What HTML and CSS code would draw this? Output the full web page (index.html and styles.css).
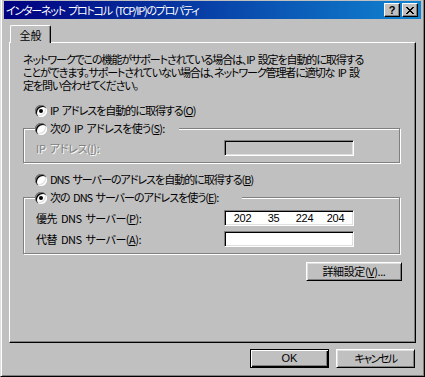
FILE: index.html
```html
<!doctype html>
<html>
<head>
	<meta charset='utf-8'>
	<title>インターネット プロトコル (TCP/IP)のプロパティ</title>
	<link rel="stylesheet" href="styles.css">
</head>
<body>

	<div class='window'>
		<div class='titlebar'>
			<span class='title'>インターネット プロトコル (TCP/IP)のプロパティ</span>
			<div class='caption-buttons'>
				<span class='cap-btn help'>?</span>
				<span class='cap-btn close'>
					<svg width='8' height='7' viewBox='0 0 8 7'>
						<path d='M0 0h2v1h1v1h2v-1h1v-1h2v1h-1v1h-1v1h-1v1h1v1h1v1h1v1h-2v-1h-1v-1h-2v1h-1v1h-2v-1h1v-1h1v-1h1v-1h-1v-1h-1v-1h-1z' fill='#000'/>
					</svg>
				</span>
			</div>
		</div>

		<div class='client'>
			<div class='tabs'>
				<div class='tab active'>全般</div>
			</div>

			<div class='panel'>
				<p class='intro'>ネットワークでこの機能がサポートされている場合は、IP 設定を自動的に取得する<br>ことができます。サポートされていない場合は、ネットワーク管理者に適切な IP 設<br>定を問い合わせてください。</p>

				<div class='radio-row first'>
					<span class='radio checked'></span>
					<span class='radio-text'>IP アドレスを自動的に取得する(<u>O</u>)</span>
				</div>

				<fieldset class='group group-ip'>
					<legend class='radio-row'>
						<span class='radio'></span>
						<span class='radio-text short'>次の IP アドレスを使う(<u>S</u>):</span>
					</legend>
					<div class='field-row'>
						<span class='label disabled'>IP アドレス(<u>I</u>):</span>
						<span class='ip-box disabled'></span>
					</div>
				</fieldset>

				<div class='radio-row dns-auto'>
					<span class='radio'></span>
					<span class='radio-text'>DNS サーバーのアドレスを自動的に取得する(<u>B</u>)</span>
				</div>

				<fieldset class='group group-dns'>
					<legend class='radio-row'>
						<span class='radio checked'></span>
						<span class='radio-text'>次の DNS サーバーのアドレスを使う(<u>E</u>):</span>
					</legend>
					<div class='field-row'>
						<span class='label'>優先 DNS サーバー(<u>P</u>):</span>
						<span class='ip-box'>
							<span class='octet'>202</span>
							<span class='octet'>35</span>
							<span class='octet'>224</span>
							<span class='octet'>204</span>
						</span>
					</div>
					<div class='field-row'>
						<span class='label'>代替 DNS サーバー(<u>A</u>):</span>
						<span class='ip-box'></span>
					</div>
				</fieldset>

				<div class='advanced-row'>
					<span class='button advanced'>詳細設定(<u>V</u>)...</span>
				</div>
			</div>

			<div class='actions'>
				<span class='button default'>OK</span>
				<span class='button cancel'>キャンセル</span>
			</div>
		</div>
	</div>

</body>
</html>
```

FILE: styles.css
```css
* {
	box-sizing: border-box;
}

body {
	margin: 0;
	background: #c0c0c0;
	color: #000;
	font-family: "Noto Sans CJK JP", "Noto Sans", sans-serif;
	font-size: 11px;
	line-height: 13px;
	font-feature-settings: "palt";
	word-spacing: 2px;
}

u {
	text-decoration: underline;
	text-underline-offset: 1px;
}

/* The window frame */
.window {
	width: 425px;
	height: 377px;
	display: flex;
	flex-direction: column;
	background: #c0c0c0;
	border: 1px solid;
	border-color: #dfdfdf #000 #000 #dfdfdf;
	border-top: 0;
	box-shadow: inset 1px 0 #fff, inset -1px -1px #808080;
	padding: 1px 3px 3px 3px;
}

/* Title bar */
.titlebar {
	height: 18px;
	display: flex;
	align-items: center;
	justify-content: space-between;
	padding: 0 3px 0 2px;
	background: linear-gradient(to right, #000080, #1084d0);
	color: #fff;
}

.title {
	white-space: nowrap;
	letter-spacing: -1.25px;
}

.caption-buttons {
	display: flex;
	gap: 2px;
}

.cap-btn {
	width: 16px;
	height: 14px;
	display: flex;
	align-items: center;
	justify-content: center;
	background: #c0c0c0;
	color: #000;
	font-family: "Liberation Sans", sans-serif;
	font-weight: bold;
	font-size: 11px;
	border: 1px solid;
	border-color: #fff #000 #000 #fff;
	box-shadow: inset -1px -1px #808080;
}

/* Client area */
.client {
	flex: 1;
	display: flex;
	flex-direction: column;
	padding: 6px 5px 0 5px;
}

.tabs {
	display: flex;
	padding-left: 1px;
	height: 17px;
}

.tab {
	width: 41px;
	height: 18px;
	padding-top: 3px;
	text-align: center;
	background: #c0c0c0;
	border: 1px solid;
	border-color: #fff #000 transparent #fff;
	border-bottom: 0;
	border-radius: 2px 2px 0 0;
	box-shadow: inset -1px 0 #808080;
	position: relative;
	z-index: 1;
}

.panel {
	height: 301px;
	border: 1px solid;
	border-color: #fff #000 #000 #fff;
	box-shadow: inset -1px -1px #808080;
	padding: 10px 13px 0 13px;
}

.intro {
	margin: 0;
	white-space: nowrap;
	letter-spacing: -1.1px;
}

/* Radio buttons */
.radio-row {
	display: flex;
	align-items: center;
	gap: 3px;
	height: 13px;
	white-space: nowrap;
}

.radio-text {
	letter-spacing: -1px;
}

.radio-text.short {
	letter-spacing: -0.7px;
}

.radio-row.first {
	margin: 12px 0 0 12px;
}

.radio-row.dns-auto {
	margin: 10px 0 0 12px;
}

.radio {
	flex: none;
	width: 12px;
	height: 12px;
	border-radius: 50%;
	background: #fff;
	box-shadow:
		inset 1px 1px #808080,
		inset 2px 2px #000,
		inset -1px -1px #fff,
		inset -2px -2px #dfdfdf;
	display: flex;
	align-items: center;
	justify-content: center;
}

.radio.checked::after {
	content: '';
	width: 4px;
	height: 4px;
	border-radius: 50%;
	background: #000;
}

/* Group boxes */
.group {
	margin: 5px 2px 0 0;
	border: 1px solid #808080;
	box-shadow: 1px 1px #fff, inset 1px 1px #fff;
	padding: 0 0 6px 11px;
}

.group legend {
	padding: 0 14px 0 0;
	background: #c0c0c0;
	height: 13px;
}

.group-dns legend {
	padding-right: 24px;
}

.field-row {
	display: flex;
	align-items: center;
	justify-content: space-between;
	padding: 0 45px 0 1px;
	margin-top: 5px;
	white-space: nowrap;
}

.group-dns .field-row:first-of-type {
	margin-top: 6px;
}

.label {
	letter-spacing: -0.5px;
}

.label.disabled {
	color: #808080;
	text-shadow: 1px 1px #fff;
	letter-spacing: -0.3px;
}

/* IP address boxes */
.ip-box {
	width: 130px;
	height: 16px;
	display: flex;
	align-items: center;
	background: #fff;
	border: 1px solid;
	border-color: #808080 #fff #fff #808080;
	box-shadow: inset 1px 1px #000, inset -1px -1px #dfdfdf;
	padding: 0 2px;
	word-spacing: 0;
}

.ip-box.disabled {
	background: #c0c0c0;
}

.octet {
	flex: 1;
	text-align: center;
	font-family: "Liberation Sans", sans-serif;
	font-size: 11px;
	letter-spacing: -0.3px;
}

/* Buttons */
.button {
	display: flex;
	align-items: center;
	justify-content: center;
	height: 19px;
	background: #c0c0c0;
	border: 1px solid;
	border-color: #fff #000 #000 #fff;
	box-shadow: inset 1px 1px #dfdfdf, inset -1px -1px #808080;
	white-space: nowrap;
}

.advanced-row {
	display: flex;
	justify-content: flex-end;
	margin-top: 8px;
}

.button.advanced {
	width: 96px;
	letter-spacing: -0.4px;
}

.actions {
	display: flex;
	justify-content: flex-end;
	gap: 7px;
	margin-top: 6px;
	padding-right: 1px;
}

.actions .button {
	width: 79px;
}

.button.cancel {
	letter-spacing: -1.5px;
}

.button.default {
	border-color: #000;
	box-shadow: inset 1px 1px #fff, inset -1px -1px #000, inset -2px -2px #808080;
	font-family: "Liberation Sans", sans-serif;
}
```
